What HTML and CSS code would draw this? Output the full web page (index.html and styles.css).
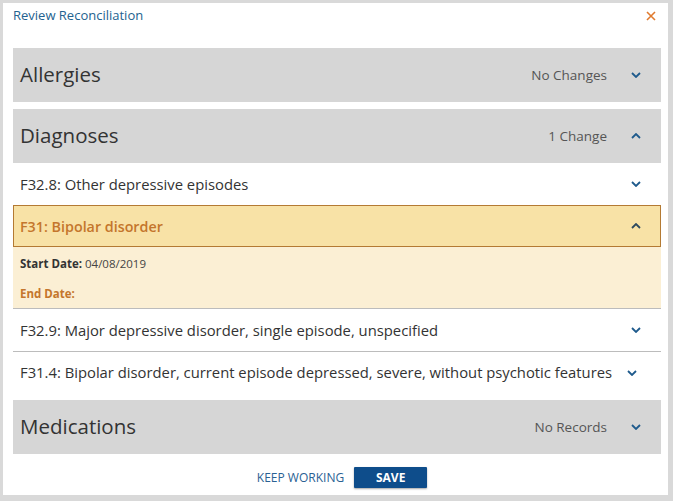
FILE: index.html
```
<!DOCTYPE html>
<html>
<head>
<meta charset="utf-8">
<link rel="stylesheet" href="styles.css">
</head>
<body>
<div class="modal">
  <div class="modal-head">
    <span class="title">Review Reconciliation</span>
    <svg class="close" viewBox="0 0 10 10"><path d="M1 1 L9 9 M9 1 L1 9"/></svg>
  </div>

  <div class="section">
    <div class="sec-head">
      <span class="sec-title">Allergies</span>
      <span class="sec-status">No Changes</span>
      <svg class="chev" viewBox="0 0 10 6"><path d="M1 1 L5 5 L9 1"/></svg>
    </div>
  </div>

  <div class="section">
    <div class="sec-head">
      <span class="sec-title">Diagnoses</span>
      <span class="sec-status">1 Change</span>
      <svg class="chev" viewBox="0 0 10 6"><path d="M1 5 L5 1 L9 5"/></svg>
    </div>
    <div class="row">
      <span class="row-text">F32.8: Other depressive episodes</span>
      <svg class="chev" viewBox="0 0 10 6"><path d="M1 1 L5 5 L9 1"/></svg>
    </div>
    <div class="row active">
      <span class="row-text">F31: Bipolar disorder</span>
      <svg class="chev" viewBox="0 0 10 6"><path d="M1 5 L5 1 L9 5"/></svg>
    </div>
    <div class="details">
      <div class="detail"><b>Start Date:</b> 04/08/2019</div>
      <div class="detail changed"><b>End Date:</b></div>
    </div>
    <div class="row bordered">
      <span class="row-text">F32.9: Major depressive disorder, single episode, unspecified</span>
      <svg class="chev" viewBox="0 0 10 6"><path d="M1 1 L5 5 L9 1"/></svg>
    </div>
    <div class="row last">
      <span class="row-text">F31.4: Bipolar disorder, current episode depressed, severe, without psychotic features</span>
      <svg class="chev" viewBox="0 0 10 6"><path d="M1 1 L5 5 L9 1"/></svg>
    </div>
  </div>

  <div class="section">
    <div class="sec-head">
      <span class="sec-title">Medications</span>
      <span class="sec-status">No Records</span>
      <svg class="chev" viewBox="0 0 10 6"><path d="M1 1 L5 5 L9 1"/></svg>
    </div>
  </div>

  <div class="footer">
    <button class="link-btn">KEEP WORKING</button>
    <button class="save-btn">SAVE</button>
  </div>
</div>
</body>
</html>
```
FILE: styles.css
```
* { box-sizing: border-box; }
html, body { margin: 0; padding: 0; }
body {
  background: #d9d9d9;
  font-family: "Open Sans", "Liberation Sans", sans-serif;
  color: #333;
  width: 673px;
  height: 501px;
  overflow: hidden;
}
.modal {
  margin: 3px 0 0 3px;
  width: 665px;
  height: 492px;
  background: #fff;
  padding: 0 7px 0 10px;
  display: flex;
  flex-direction: column;
}
.modal-head {
  height: 45px;
  display: flex;
  justify-content: space-between;
  align-items: flex-start;
  padding-top: 3px;
}
.title {
  font-size: 13px;
  line-height: 19px;
  color: #23628f;
}
.close {
  width: 10px;
  height: 10px;
  margin-top: 5px;
  margin-right: 5px;
  fill: none;
  stroke: #e07a2e;
  stroke-width: 1.6;
}
.section { margin-bottom: 7px; }
.sec-head {
  height: 54px;
  background: #d6d6d6;
  display: flex;
  align-items: center;
  padding: 0 20px 0 7px;
}
.sec-title {
  font-size: 20.5px;
  line-height: 26px;
  flex: 1;
  color: #333;
  margin-top: -2px;
}
.sec-status {
  font-size: 13.5px;
  color: #555;
  margin-right: 24px;
  margin-top: -1px;
}
.chev {
  width: 10px;
  height: 6px;
  fill: none;
  stroke: #1e5a8c;
  stroke-width: 1.8;
  flex: none;
}
.row {
  height: 42px;
  display: flex;
  align-items: center;
  padding: 0 20px 0 7px;
  font-size: 14.8px;
}
.row-text { flex: 1; color: #333; }
.row.bordered { height: 43px; border-bottom: 1px solid #bcbcbc; }
.row.last { height: 41px; padding-right: 24px; }
.row.last .row-text { margin-top: -2px; }
.row.active {
  background: #f8e2a6;
  border: 1px solid #b47a33;
  padding: 0 19px 0 6px;
}
.row.active .row-text { color: #c4762c; font-weight: 600; font-size: 14.3px; }
.row.active .chev { stroke: #2e4a5e; }
.details {
  background: #fbefd4;
  border-bottom: 1px solid #bcbcbc;
  padding: 9px 7px 0;
  height: 62px;
}
.detail {
  font-size: 11.5px;
  line-height: 16px;
  color: #444;
  margin-bottom: 14px;
}
.detail b { font-weight: 700; color: #333; }
.detail.changed b { color: #c4762c; }
.footer {
  flex: 1;
  display: flex;
  justify-content: center;
  align-items: center;
  gap: 10px;
  padding-left: 10px;
  padding-bottom: 2px;
}
.link-btn {
  background: none;
  border: none;
  font-family: inherit;
  font-size: 12px;
  color: #2a6193;
  padding: 0;
}
.save-btn {
  width: 73px;
  height: 21px;
  background: #0e4d8b;
  color: #fff;
  border: none;
  border-radius: 1px;
  font-family: inherit;
  font-size: 12px;
  font-weight: 700;
  box-shadow: 0 1px 2px rgba(0,0,0,0.35);
  padding: 0;
}
```
